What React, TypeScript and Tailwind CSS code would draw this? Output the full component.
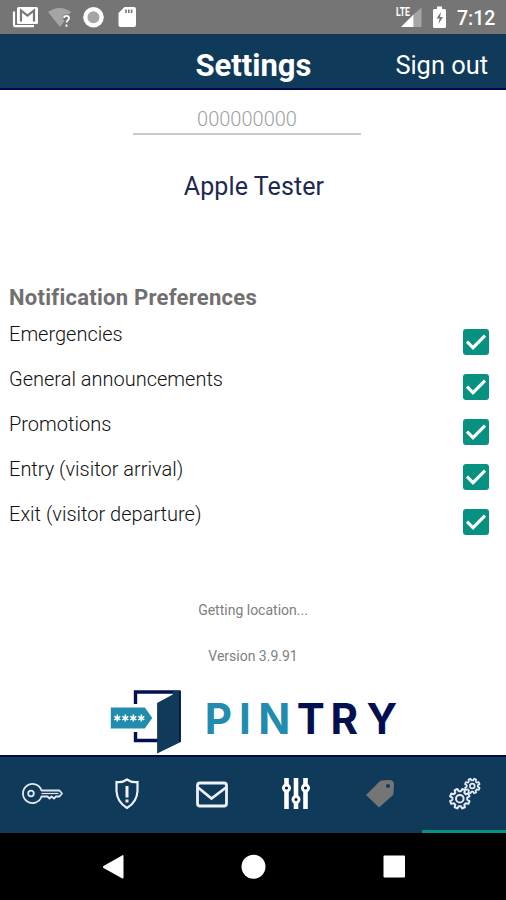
import type { ReactNode } from 'react'

const preferences = [
  'Emergencies',
  'General announcements',
  'Promotions',
  'Entry (visitor arrival)',
  'Exit (visitor departure)',
]

function gearPath(cx: number, cy: number, outer: number, inner: number, teeth: number) {
  const step = (Math.PI * 2) / teeth
  const pts: string[] = []
  for (let i = 0; i < teeth; i++) {
    const a = i * step - Math.PI / 2 + step / 2
    const corners = [[-0.32, inner], [-0.19, outer], [0.19, outer], [0.32, inner]]
    for (const [t, r] of corners) {
      pts.push(`${(cx + r * Math.cos(a + t * step)).toFixed(2)} ${(cy + r * Math.sin(a + t * step)).toFixed(2)}`)
    }
  }
  return `M${pts.join('L')}Z`
}

function StatusBar() {
  return (
    <div className="flex h-[34px] items-center justify-between bg-[#757575] text-white">
      <svg width="150" height="34" viewBox="0 0 150 34" fill="none">
        {/* Gmail */}
        <path d="M14 11.500V25q0 1.200 1.200 1.200H34" stroke="white" strokeWidth="2.200" />
        <rect x="17" y="7" width="21" height="17" rx="1.5" fill="white" />
        <path d="M21 21.500V10.500l6.500 5 6.500-5v11" stroke="#757575" strokeWidth="2.2" />
        {/* Wifi */}
        <path d="M48 12Q60 4 71 12L69 14.500Q63 13 62.500 18L64.500 21L60 27Z" fill="#a5a5a5" />
        <path d="M64 18q0-2.200 2.500-2.200t2.500 2.300c0 2.200-2.500 2.300-2.500 4.500M66.500 24.500v2.200" stroke="white" strokeWidth="1.8" />
        <circle cx="93.5" cy="17.3" r="10.3" fill="white" />
        <circle cx="93.5" cy="17.3" r="6" fill="#a5a5a5" />
        {/* SD card */}
        <path d="M124.500 7H134q2 0 2 2v16q0 2-2 2h-13.500q-2 0-2-2V13Z" fill="white" />
        <path d="M126 9.500v3.500M128.800 9.500v3.500M131.600 9.500v3.500" stroke="#757575" strokeWidth="1.6" />
      </svg>
      <div className="flex items-center">
        <svg width="58" height="34" viewBox="390 0 58 34" fill="none">
          <path d="M413.500 27V14.500L421.500 7.500V27Z" fill="#a5a5a5" />
          <path d="M401 27L413.500 14.500V27Z" fill="white" />
          <text x="396" y="16" fontSize="12" fontWeight="700" fontFamily="Roboto, sans-serif" fill="white" textLength="14" lengthAdjust="spacingAndGlyphs">LTE</text>
          <path d="M434.500 9h2.500V6.500h5V9h2.500q1.500 0 1.500 1.500v16q0 1.500-1.500 1.500h-10q-1.500 0-1.500-1.500v-16q0-1.500 1.500-1.500Z" fill="white" />
          <path d="M441 12l-4.500 6.500h3l-1 5.500 4.500-7h-3Z" fill="#757575" />
        </svg>
        <span className="mr-2.5 ml-[9px] w-[39px] pt-[3px] text-[19.500px] leading-[30px] font-medium whitespace-nowrap">7:12</span>
      </div>
    </div>
  )
}

function Header() {
  return (
    <header className="grid h-14 grid-cols-[1fr_auto_1fr] items-center border-b-2 border-[#03084d] bg-[#103a5a] pt-1 text-white">
      <span />
      <h1 className="pt-0.5 pl-px text-[31px] leading-[52px] font-bold">Settings</h1>
      <button className="mr-[18px] text-right text-[25.4px] leading-[50px] whitespace-nowrap">Sign out</button>
    </header>
  )
}

function CheckBox() {
  return (
    <span className="flex size-[26px] items-center justify-center rounded-[3px] bg-[#079181]">
      <svg width="26" height="26" viewBox="0 0 26 26" fill="none">
        <path d="M4 12.700L10 18.700L22 6.700" stroke="white" strokeWidth="3.100" />
      </svg>
    </span>
  )
}

function Logo() {
  return (
    <svg width="290" height="66" viewBox="108.200 689 290 66" fill="none">
      <path d="M135.700 704V692H180M135.700 732V740.500H160" stroke="#03104f" strokeWidth="3.400" />
      <path d="M157.300 703L173 694.500V691H181V742L157.300 753.500Z" fill="#103a5a" />
      <path d="M180.200 690.500V742" stroke="#03104f" strokeWidth="1.500" />
      <path d="M111 707.500H145L152.500 718L145 728.500H111Z" fill="#218cad" />
      {[117.500, 125.500, 133.500, 141.500].map(x => (
        <path
          key={x}
          d={`M${x} 714.500v7M${x - 3} 716.300l6 3.500M${x + 3} 716.300l-6 3.500`}
          stroke="white"
          strokeWidth="1.500"
        />
      ))}
      <text y="733.500" fontSize="42" fontWeight="700" fontFamily="Inter, sans-serif">
        <tspan x="205 239.300 258.500" fill="#218cad">PIN</tspan>
        <tspan x="297 330.800 366.800" fill="#03104f">TRY</tspan>
      </text>
    </svg>
  )
}

function Tab({ children, active = false }: { children: ReactNode; active?: boolean }) {
  return (
    <div className={`flex flex-1 items-center justify-center border-b-[3px] ${active ? 'border-[#079181]' : 'border-transparent'}`}>
      {children}
    </div>
  )
}

function TabBar() {
  return (
    <nav className="flex h-[78px] border-t-2 border-[#03084d] bg-[#103a5a]">
      <Tab>
        <svg width="44" height="44" viewBox="19.500 772 44 44" fill="none" stroke="#e2e7f4" strokeWidth="1.800" strokeLinejoin="round">
          <path d="M41 790.500A9.500 9.500 0 1 0 41 796.500H47L49 798.500L51 796.500L53.500 798.500L55.500 796.500H59L61.500 793.500L59 790.500Z" />
          <circle cx="30.500" cy="793.500" r="2.800" />
          <path d="M41 793.500H58" strokeWidth="1.200" />
        </svg>
      </Tab>
      <Tab>
        <svg width="44" height="44" viewBox="104 772 44 44" fill="none" stroke="#eef0fa" strokeWidth="2.200">
          <path d="M127 779.500Q122 783 116.500 782V791Q117 802 127 808Q137 802 137.500 791V782Q132 783 127 779.500Z" />
          <path d="M127 786V797.500M127 799.500V802.500" strokeWidth="3" />
        </svg>
      </Tab>
      <Tab>
        <svg width="44" height="44" viewBox="189 772.500 44 44" fill="none" stroke="#eef0fa" strokeWidth="2.800">
          <rect x="197.500" y="783.500" width="29" height="23" rx="2.500" />
          <path d="M198 788L211.500 799L226 788" />
        </svg>
      </Tab>
      <Tab>
        <svg width="44" height="44" viewBox="273 772 44 44" fill="none">
          <path d="M286.500 778V809M296 778V809M305.500 778V809" stroke="white" strokeWidth="4.600" />
          <g fill="#03084d" stroke="white" strokeWidth="3">
            <circle cx="286.500" cy="788" r="3" />
            <circle cx="296" cy="799.500" r="3" />
            <circle cx="305.500" cy="788" r="3" />
          </g>
        </svg>
      </Tab>
      <Tab>
        <svg width="44" height="44" viewBox="357.500 772 44 44">
          <path
            d="M382 780.500L390 780Q394.500 780 394.500 784.500L394 793Q394 794.500 393 795.500L379.500 807.500L366.500 795L380 781.500Q381 780.500 382 780.500Z"
            fill="#757575"
          />
          <circle cx="388.500" cy="786" r="2" fill="#103a5a" />
        </svg>
      </Tab>
      <Tab active>
        <svg width="44" height="44" viewBox="442 772 44 44" fill="none" stroke="#e6eaf6" strokeWidth="2" strokeLinejoin="round">
          <path d={gearPath(459.800, 798.700, 10, 7.500, 8)} />
          <circle cx="459.800" cy="798.700" r="3.800" />
          <path d={gearPath(472.300, 786, 7.500, 5.600, 8)} strokeWidth="1.700" />
          <circle cx="472.300" cy="786" r="2.400" strokeWidth="1.700" />
        </svg>
      </Tab>
    </nav>
  )
}

function SystemNav() {
  return (
    <div className="flex h-[67px] items-center justify-center bg-black">
      <svg width="304" height="28" viewBox="101 853 304 28" fill="white">
        <path d="M122 855.500Q123.500 854.500 123.500 856V877.500Q123.500 879 122 878.200L103.500 868Q102 867 103.500 866Z" />
        <circle cx="253.500" cy="866.800" r="12" />
        <rect x="383.500" y="855.500" width="21.500" height="22" rx="1" />
      </svg>
    </div>
  )
}

export default function App() {
  return (
    <div className="flex h-[900px] w-[506px] flex-col overflow-hidden bg-white font-[Roboto,sans-serif]">
      <StatusBar />
      <Header />
      <main className="flex flex-1 flex-col">
        <div className="mt-3 ml-[133px] h-[33px] w-[228px] border-b-2 border-[#c8c8c8] text-center text-[20px] leading-[34px] font-light text-[#a0a0a0]">
          000000000
        </div>
        <p className="mt-9 h-8 pl-0.5 text-center text-[25px] leading-8 tracking-[0.1px] text-[#1d2950]">Apple Tester</p>
        <section className="mt-[78px] px-[9px]">
          <h2 className="h-8 text-[22px] leading-[33px] font-bold tracking-[0.26px] text-[#707070]">Notification Preferences</h2>
          <ul className="mt-2">
            {preferences.map(label => (
              <li key={label} className="flex h-[45px] items-start justify-between pr-2">
                <span className="text-[20px] leading-[26px] font-light text-[#111]">{label}</span>
                <span className="pt-2">
                  <CheckBox />
                </span>
              </li>
            ))}
          </ul>
        </section>
        <div className="mt-auto flex flex-col items-center text-[14px] text-[#808080]">
          <p className="mb-[26px] leading-5">Getting location...</p>
          <p className="mb-[23px] leading-5">Version 3.9.91</p>
          <Logo />
        </div>
      </main>
      <TabBar />
      <SystemNav />
    </div>
  )
}
